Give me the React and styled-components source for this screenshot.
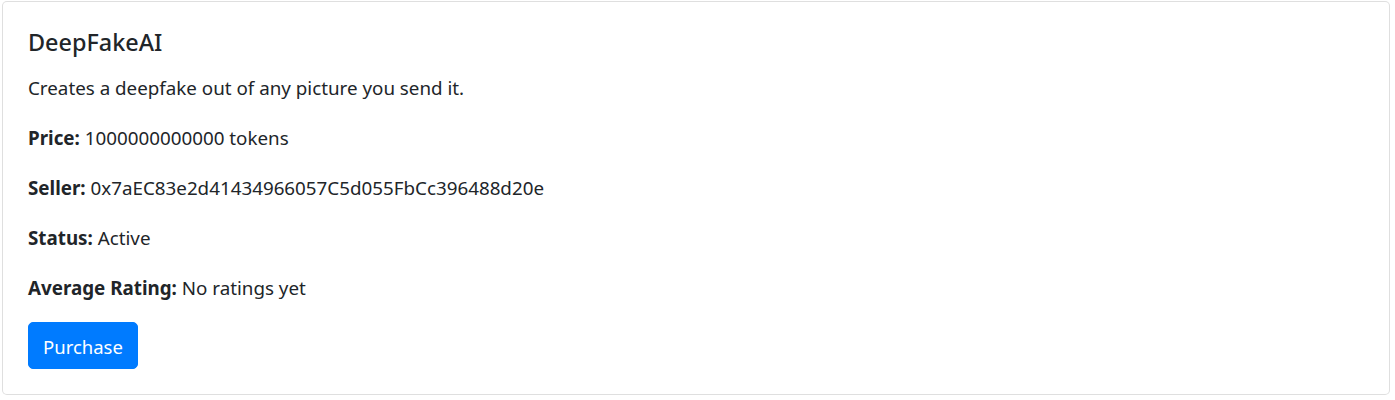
import React from 'react'
import styled, { createGlobalStyle } from 'styled-components'

const GlobalStyle = createGlobalStyle`
    html, body {
        margin: 0;
        padding: 0;
        background: #fff;
    }
    body {
        font-family: 'Noto Sans', 'Open Sans', sans-serif;
        color: #212529;
    }
`

const Page = styled.div`
    padding: 1px 5px 5px 2px;
`

const Card = styled.div`
    border: 1px solid rgba(0, 0, 0, 0.125);
    border-radius: 5px;
    background: #fff;
`

const CardBody = styled.div`
    padding: 27px 25px 25px 25px;
`

const Title = styled.h5`
    margin: 0 0 19px 0;
    font-size: 23.4px;
    font-weight: 500;
    line-height: 27px;
`

const Line = styled.p`
    margin: 0 0 23px 0;
    font-size: 18.8px;
    line-height: 27px;

    &:last-of-type {
        margin-bottom: 20px;
    }
`

const Label = styled.strong`
    font-weight: 700;
`

const Button = styled.button`
    display: inline-block;
    font-family: inherit;
    font-size: 18.5px;
    line-height: 27px;
    padding: 10px 14px 8px 14px;
    color: #fff;
    background: #007bff;
    border: 1px solid #007bff;
    border-radius: 5px;
    cursor: pointer;
`

const listing = {
    name: 'DeepFakeAI',
    description: 'Creates a deepfake out of any picture you send it.',
    price: '1000000000000',
    seller: '0x7aEC83e2d41434966057C5d055FbCc396488d20e',
    status: 'Active',
    rating: 'No ratings yet',
}

const App = () => (
    <Page>
        <GlobalStyle />
        <Card>
            <CardBody>
                <Title>{listing.name}</Title>
                <Line>{listing.description}</Line>
                <Line>
                    <Label>Price:</Label> {listing.price} tokens
                </Line>
                <Line>
                    <Label>Seller:</Label> {listing.seller}
                </Line>
                <Line>
                    <Label>Status:</Label> {listing.status}
                </Line>
                <Line>
                    <Label>Average Rating:</Label> {listing.rating}
                </Line>
                <Button>Purchase</Button>
            </CardBody>
        </Card>
    </Page>
)

export default App
